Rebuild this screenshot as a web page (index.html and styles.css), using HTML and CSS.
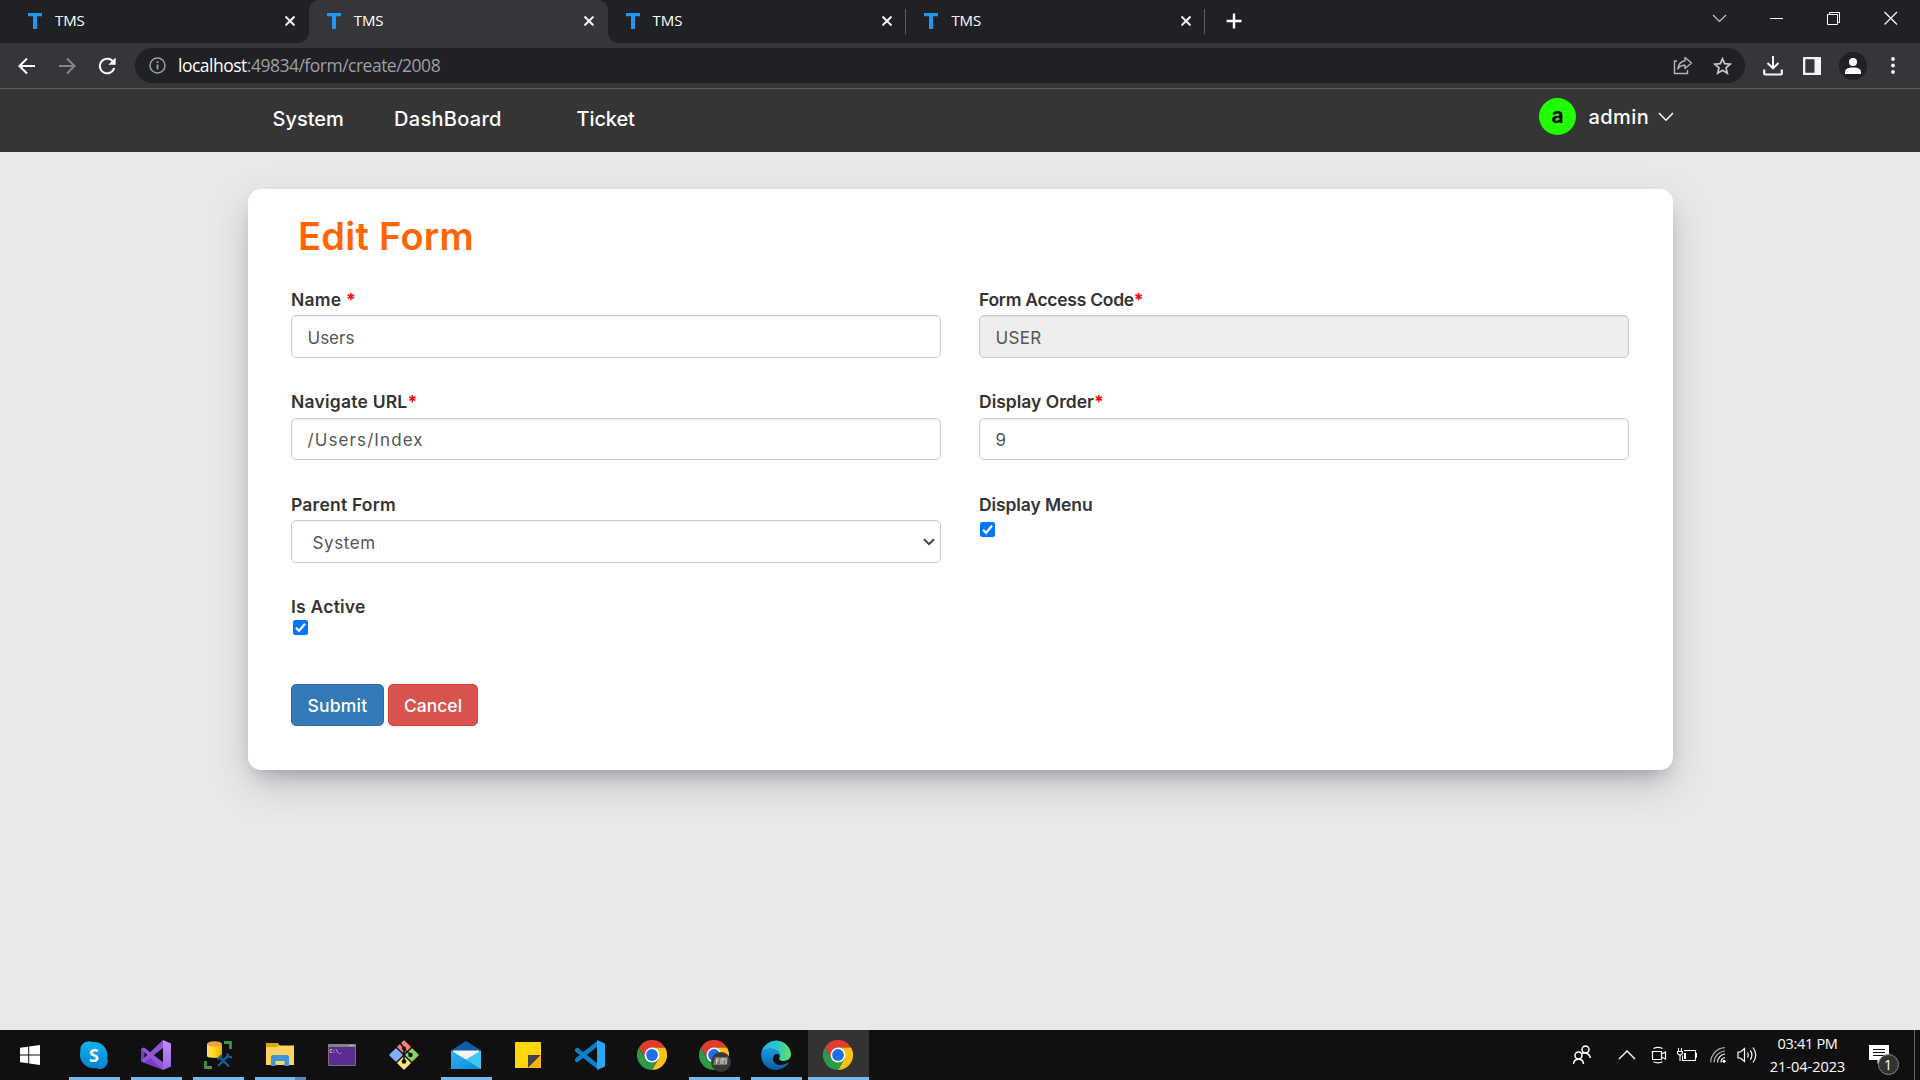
FILE: index.html
```html
<!DOCTYPE html>
<html lang="en">
<head>
<meta charset="utf-8">
<title>TMS</title>
<link rel="stylesheet" href="styles.css">
</head>
<body>
<svg class="defs" width="0" height="0">
  <defs>
    <linearGradient id="g-skype" x1="0" y1="0" x2="0" y2="1"><stop offset="0" stop-color="#0cb4ee"/><stop offset="1" stop-color="#0781cf"/></linearGradient>
    <linearGradient id="g-edge" x1="0" y1="0" x2="1" y2="0"><stop offset="0" stop-color="#2bb2ee"/><stop offset=".55" stop-color="#2cc6c8"/><stop offset="1" stop-color="#6ce05c"/></linearGradient>
    <linearGradient id="g-edge2" x1="0" y1="0" x2="0" y2="1"><stop offset="0" stop-color="#1a9be0"/><stop offset="1" stop-color="#0c5aa8"/></linearGradient>
    <linearGradient id="g-mail" x1="0" y1="0" x2="1" y2="1"><stop offset="0" stop-color="#2fb3ee"/><stop offset="1" stop-color="#0f86dc"/></linearGradient>
    <linearGradient id="g-vs" x1="0" y1="0" x2="0" y2="1"><stop offset="0" stop-color="#c08cf4"/><stop offset="1" stop-color="#9b63e6"/></linearGradient>
    <linearGradient id="g-db" x1="0" y1="0" x2="1" y2="0"><stop offset="0" stop-color="#ffe26b"/><stop offset=".6" stop-color="#ffd500"/><stop offset="1" stop-color="#e6ae00"/></linearGradient>
    <symbol id="chrome" viewBox="0 0 30 30">
      <path fill="#e33b2e" d="M2 7.5A15 15 0 0 1 28 7.5H15L8.5 18.8Z"/>
      <path fill="#fbc116" d="M28 7.5A15 15 0 0 1 15 30L21.5 18.7 15 7.5Z"/>
      <path fill="#2c9a47" d="M2 7.5A15 15 0 0 0 15 30L21.5 18.7H8.5Z"/>
      <circle cx="15" cy="15" r="7.5" fill="#fff"/><circle cx="15" cy="15" r="5.9" fill="#1f6fea"/>
    </symbol>
    <symbol id="tee" viewBox="0 0 14 16"><path fill="#2196f3" d="M0 0H14V3.2H9V16H5V3.2H0Z"/></symbol>
    <symbol id="ex" viewBox="0 0 10 10"><path d="M.5 .5 9.5 9.5M9.5 .5.5 9.5" stroke="#f1f3f4" stroke-width="2" fill="none"/></symbol>
  </defs>
</svg>

<header class="tabstrip">
  <div class="tab"><svg class="favicon"><use href="#tee"/></svg><span class="tab-title">TMS</span><svg class="tab-close"><use href="#ex"/></svg></div>
  <div class="tab active"><svg class="favicon"><use href="#tee"/></svg><span class="tab-title">TMS</span><svg class="tab-close"><use href="#ex"/></svg></div>
  <div class="tab ruled"><svg class="favicon"><use href="#tee"/></svg><span class="tab-title">TMS</span><svg class="tab-close"><use href="#ex"/></svg></div>
  <div class="tab ruled"><svg class="favicon"><use href="#tee"/></svg><span class="tab-title">TMS</span><svg class="tab-close"><use href="#ex"/></svg></div>
  <svg class="new-tab" width="16" height="16" viewBox="0 0 16 16"><path d="M8 .5V15.5M.5 8H15.5" stroke="#fff" stroke-width="2.4"/></svg>
  <div class="window-controls">
    <svg width="57" height="37" viewBox="0 0 57 37"><path d="M22 15 28.5 21.5 35 15" fill="none" stroke="#c6c7c9" stroke-width="1.2"/></svg>
    <svg width="57" height="37" viewBox="0 0 57 37"><path d="M22 18.5H35" stroke="#fff"/></svg>
    <svg width="57" height="37" viewBox="0 0 57 37"><path d="M22.5 14.500H32.500V24.500H22.500ZM24.500 14.500V12.500H34.500V22.500H32.500" fill="none" stroke="#fff"/></svg>
    <svg width="57" height="37" viewBox="0 0 57 37"><path d="M22.500 12 35 24.500M35 12 22.500 24.500" stroke="#fff" stroke-width="1.2"/></svg>
  </div>
</header>

<div class="toolbar">
  <svg class="tool" width="18" height="18" viewBox="0 0 18 18"><path d="M17 9H2.500M9 1.500 1.500 9 9 16.500" fill="none" stroke="#fff" stroke-width="2"/></svg>
  <svg class="tool" width="18" height="18" viewBox="0 0 18 18"><path d="M1 9H15.500M9 1.500 16.500 9 9 16.500" fill="none" stroke="#84868a" stroke-width="2"/></svg>
  <svg class="tool" width="18" height="18" viewBox="0 0 18 18"><path d="M15.300 5A7.300 7.300 0 1 0 16.200 11" fill="none" stroke="#fff" stroke-width="2"/><path d="M17.600 .500V7.800H10.300Z" fill="#fff"/></svg>
  <div class="omnibox">
    <svg width="17" height="17" viewBox="0 0 17 17"><circle cx="8.500" cy="8.500" r="7.500" fill="none" stroke="#9aa0a6" stroke-width="1.500"/><path d="M8.500 7.500V12.500M8.500 4.300V6" stroke="#9aa0a6" stroke-width="1.800"/></svg>
    <span class="url"><b class="host">localhost</b>:49834/form/create/2008</span>
    <svg class="share" width="20" height="19" viewBox="0 0 20 19"><path d="M4 5H1.500V17.500H14.500V14" fill="none" stroke="#b4b5b7" stroke-width="1.400"/><path d="M12 1.500 18.500 7 12 12.500V9.300C8.500 9.300 6.300 10.500 4.800 13 5.200 8.500 7.800 5.500 12 4.800Z" fill="none" stroke="#b4b5b7" stroke-width="1.400" stroke-linejoin="round"/></svg>
    <svg width="19" height="18" viewBox="0 0 19 18"><path d="M9.500 1.800 11.700 6.700 17.200 7.200 13 10.800 14.300 16.200 9.500 13.300 4.700 16.200 6 10.800 1.800 7.200 7.300 6.700Z" fill="none" stroke="#c6c7c8" stroke-width="1.700"/></svg>
  </div>
  <div class="actions">
    <svg width="20" height="20" viewBox="0 0 20 20"><path d="M10 0V11M4.500 7 10 12.300 15.500 7" fill="none" stroke="#f1f3f4" stroke-width="2"/><path d="M1.200 13.500V17.500Q1.200 18.500 2.200 18.500H17.800Q18.800 18.500 18.800 17.500V13.500" fill="none" stroke="#f1f3f4" stroke-width="2.200"/></svg>
    <svg width="18" height="18" viewBox="0 0 18 18"><path d="M0 0H18V18H0ZM2.300 2.300V15.700H11.500V2.300Z" fill="#f1f3f4" fill-rule="evenodd"/></svg>
    <svg width="28" height="28" viewBox="0 0 28 28"><circle cx="14" cy="14" r="14" fill="#202124"/><circle cx="14" cy="10" r="4" fill="#fff"/><path d="M6 22V20C6 17 9.500 15.600 14 15.600S22 17 22 20V22Z" fill="#fff"/></svg>
    <svg width="4" height="17" viewBox="0 0 4 17"><circle cx="2" cy="2" r="1.900" fill="#f1f3f4"/><circle cx="2" cy="8.500" r="1.900" fill="#f1f3f4"/><circle cx="2" cy="15" r="1.900" fill="#f1f3f4"/></svg>
  </div>
</div>

<nav class="site-nav">
  <a class="link system">System</a>
  <a class="link dashboard">DashBoard</a>
  <a class="link ticket">Ticket</a>
  <div class="account"><span class="avatar">a</span><span class="user">admin</span><svg width="16" height="10" viewBox="0 0 16 10"><path d="M1 1 8 8.300 15 1" fill="none" stroke="#fff" stroke-width="1.400"/></svg></div>
</nav>

<main class="page">
  <section class="card">
    <h1 class="title">Edit Form</h1>
    <form class="fields">
      <div class="field"><label class="label loose">Name <i class="req">*</i></label><div class="control">Users</div></div>
      <div class="field"><label class="label tight">Form Access Code<i class="req">*</i></label><div class="control disabled">USER</div></div>
      <div class="field"><label class="label loose">Navigate URL<i class="req">*</i></label><div class="control short path">/Users/Index</div></div>
      <div class="field"><label class="label">Display Order<i class="req">*</i></label><div class="control short">9</div></div>
      <div class="field"><label class="label loose">Parent Form</label><div class="control select">System<svg width="12" height="8" viewBox="0 0 12 8"><path d="M1 1.200 6 6.200 11 1.200" fill="none" stroke="#444" stroke-width="2"/></svg></div></div>
      <div class="field"><label class="label snug">Display Menu</label><svg class="check spaced" width="15" height="15" viewBox="0 0 15 15"><rect width="15" height="15" rx="2.200" fill="#0075ff"/><path d="M3 7.800 6 10.900 12 3.700" fill="none" stroke="#fff" stroke-width="2.200"/></svg></div>
      <div class="field"><label class="label loose">Is Active</label><svg class="check" width="15" height="15" viewBox="0 0 15 15"><rect width="15" height="15" rx="2.200" fill="#0075ff"/><path d="M3 7.800 6 10.900 12 3.700" fill="none" stroke="#fff" stroke-width="2.200"/></svg></div>
    </form>
    <div class="buttons"><button class="btn submit">Submit</button><button class="btn cancel">Cancel</button></div>
  </section>
</main>

<footer class="taskbar">
  <div class="slot start"><svg width="20" height="20" viewBox="0 0 20 20"><path fill="#fff" d="M0 2.800 8.200 1.700V9.500H0ZM9.200 1.500 20 0V9.500H9.200ZM0 10.500H8.200V18.300L0 17.200ZM9.200 10.500H20V20L9.200 18.500Z"/></svg></div>
  <div class="slot open"><svg width="30" height="30" viewBox="0 0 30 30"><path d="M9 1.500A8 8 0 0 0 1.500 11 13.500 13.500 0 0 0 17 28 8 8 0 0 0 28.200 18 13.500 13.500 0 0 0 13.500 2 8 8 0 0 0 9 1.500Z" fill="url(#g-skype)"/><text class="skype-s" x="15" y="21.500" text-anchor="middle">S</text></svg></div>
  <div class="slot open"><svg width="30" height="30" viewBox="0 0 30 30"><path fill="#7a3cc0" d="M0 9 3 7.500 22 22.500V30L3 22.700 0 21Z"/><path fill="#111" d="M3.500 11.500V18.500L7 15Z"/><path fill="#8f55d6" d="M0 21 22 0V8L3 22.700Z"/><path fill="#9355d8" d="M3 7.500 22 22.500V30L0 9Z"/><path fill="#111" d="M22 9.500V20.500L15 15Z"/><path fill="url(#g-vs)" d="M22 0 30 3.500V26.500L22 30Z"/></svg></div>
  <div class="slot open"><svg width="30" height="30" viewBox="0 0 30 30"><path d="M4 4V16C4 18.500 19 18.500 19 16V4Z" fill="url(#g-db)"/><ellipse cx="11.500" cy="4" rx="7.500" ry="2.800" fill="#eba34e"/><path d="M21 2.500H27.500V9M2.500 21V27.500H9" fill="none" stroke="#3f9446" stroke-width="2.800"/><path d="M15 26 25.500 15.500M17 17.500 26 26.500M14.500 19.500 19 15M24 13.500 25.500 16.500 29 17.500" fill="none" stroke="#10609f" stroke-width="2.300"/></svg></div>
  <div class="slot open stacked"><svg width="30" height="30" viewBox="0 0 30 30"><path fill="#e0a010" d="M1 3H13L15 6H28V12H1Z"/><path fill="#ffd35d" d="M1 7H11L14 5.500H29V25H1Z"/><path fill="#3e94dc" d="M6 26V17Q6 15 8 15H22Q24 15 24 17V26H19.500V21H10.500V26Z"/></svg></div>
  <div class="slot"><svg width="30" height="30" viewBox="0 0 30 30"><path fill="#5b2d90" stroke="#77717c" d="M1.500 4.500H28.500V25.500H1.500Z"/><path fill="#85818a" d="M1 4H29V7H1Z"/><path d="M22 5.500H28" stroke="#ddd" stroke-dasharray="1 1"/><text class="prompt" x="2.500" y="12.500">C:\_</text></svg></div>
  <div class="slot"><svg width="30" height="30" viewBox="0 0 30 30"><rect x="10" y="2" width="10" height="10" rx="1" transform="rotate(45 15 7)" fill="#f6807d"/><rect x="2" y="10" width="10" height="10" rx="1" transform="rotate(45 7 15)" fill="#82aef9"/><rect x="18" y="10" width="10" height="10" rx="1" transform="rotate(45 23 15)" fill="#8ccf60"/><rect x="10" y="18" width="10" height="10" rx="1" transform="rotate(45 15 23)" fill="#fbe27b"/><path d="M11 3 15 8V22M15 9 22 15" fill="none" stroke="#111" stroke-width="1.600"/><circle cx="15" cy="8.500" r="2" fill="#111"/><circle cx="21.500" cy="15" r="2.200" fill="#111"/><circle cx="15" cy="21.500" r="2.300" fill="#111"/></svg></div>
  <div class="slot open"><svg width="30" height="30" viewBox="0 0 30 30"><path fill="#0d5fae" d="M0 10.500 15 1 30 10.500V20H0Z"/><path fill="#f4f4f4" d="M2 10.500H28V20H2Z"/><path fill="#40c8f4" d="M30 10.500V29H8L15 19.500Z"/><path fill="url(#g-mail)" d="M0 10.500 30 29H0Z"/></svg></div>
  <div class="slot"><svg width="30" height="30" viewBox="0 0 30 30"><path fill="#ffd60a" d="M2 3Q2 2 3 2H27Q28 2 28 3V28H2Z"/><path fill="#444" d="M15 15H28L15 28Z"/><path fill="#f5b50e" d="M28 15V28H15Z"/></svg></div>
  <div class="slot"><svg width="30" height="30" viewBox="0 0 30 30"><path d="M2.200 10.200 22 26M2.200 19.800 22 4" stroke="#0b7fcd" stroke-width="4.500" stroke-linecap="round"/><path fill="#27a7f3" d="M22 0 30 3.500V26.500L22 30Z"/></svg></div>
  <div class="slot"><svg width="30" height="30"><use href="#chrome"/></svg></div>
  <div class="slot open"><svg class="profiled" width="30" height="30"><use href="#chrome"/><circle cx="22" cy="22" r="10" fill="#393939"/><path d="M16 17H29L28 25H14Z" fill="#77776c"/><path d="M17.500 19V24M17.500 19H20M17.500 21H19.500M22 24V19H24M24 24V19H27V24" stroke="#d8d8cf" fill="none"/></svg></div>
  <div class="slot open"><svg width="30" height="30" viewBox="0 0 30 30"><path fill="url(#g-edge)" d="M.500 12A15 15 0 0 1 30 14C30 19 26 21 22 21 18 21 17.500 19 18.500 17.500 20 14 17 10 12 9 7 8 2 10 .500 12Z"/><path fill="url(#g-edge2)" d="M.200 13C2 9 7 7.500 12 9 17 10 19 13 18.500 16 17 12.500 12 14 12 19 12 24 19 28 28 22 24 29 17 31 11 29.500 4 27.500-.500 21 .200 13Z"/></svg></div>
  <div class="slot open current"><svg width="30" height="30"><use href="#chrome"/></svg></div>
  <div class="tray">
    <svg width="20" height="20" viewBox="0 0 20 20"><g fill="none" stroke="#fff" stroke-width="1.500"><circle cx="13.500" cy="4.500" r="3.500"/><circle cx="6.500" cy="10.500" r="3.500"/><path d="M1.500 19C2 12.800 11 12.800 11.500 19M9.500 8.500C14 6.500 17.500 9 18.500 13"/></g></svg>
    <svg width="18" height="10" viewBox="0 0 18 10"><path d="M1 9 9 1 17 9" fill="none" stroke="#fff" stroke-width="1.400"/></svg>
    <svg width="16" height="18" viewBox="0 0 16 18"><path d="M1.500 5.500H10.500V13.500H1.500ZM10.500 8 14.500 6V13L10.500 11M2.500 2.500Q7 .300 11.500 2.500M2.500 15.800Q7 18 11.500 15.800" fill="none" stroke="#fff" stroke-width="1.200"/></svg>
    <svg width="20" height="14" viewBox="0 0 20 14"><path d="M7 2.500H18.500V12.500H5.500V7.500M18.500 5.500H19.500V9.500M1.500 0V3M4.500 0V3M.500 3.500H5.500V5.500L3 7.500.500 5.500ZM3 7V13" fill="none" stroke="#fff" stroke-width="1.100"/><path d="M7 5H9V11H7Z" fill="#fff"/></svg>
    <svg width="16" height="16" viewBox="0 0 16 16"><g fill="none" stroke="#fff" stroke-width="1.200"><path d="M11 15.500A5 5 0 0 1 15 10.500M7.500 15.500A8.500 8.500 0 0 1 15 7"/><path d="M4 15.500A12 12 0 0 1 15 4M.700 15.500A15 15 0 0 1 15 .700" stroke="#aaa"/></g><circle cx="14" cy="14.300" r="1.500" fill="#fff"/></svg>
    <svg width="21" height="18" viewBox="0 0 21 18"><path d="M1 6V12H3.500L7.500 15.500V2.500L3.500 6ZM10.500 6.500Q12 9 10.500 11.500M13.300 4.300Q16.500 9 13.300 13.700M16 1.500Q21.500 9 16 16.500" fill="none" stroke="#fff" stroke-width="1.200"/></svg>
    <div class="clock"><span class="time">03:41 PM</span><span class="date">21-04-2023</span></div>
    <div class="notice"><svg width="20" height="20" viewBox="0 0 20 20"><path fill="#fff" d="M0 0H20V15H13L8.500 19V15H0Z"/><path d="M4 4.500H16M4 7.500H16M4 10.500H16" stroke="#111" stroke-width="1.200"/></svg><span class="count">1</span></div>
    <i class="peek"></i>
  </div>
</footer>
</body>
</html>
```

FILE: styles.css
```css
* { box-sizing: border-box; }
body { margin: 0; width: 1920px; height: 1080px; overflow: hidden; display: flex; flex-direction: column; font-family: "Open Sans", "Noto Sans", sans-serif; background: #e9e9e9; }
svg { display: block; flex: none; }
.defs { position: absolute; }

.tabstrip { height: 43px; background: #202124; display: flex; align-items: flex-start; flex: none; padding-left: 10px; }
.tab { width: 298.800px; height: 43px; display: flex; align-items: center; padding: 0 14px 1px 18px; position: relative; flex: none; }
.tab.active { background: #35363a; border-radius: 10px 10px 0 0; z-index: 1; }
.tab.active::before, .tab.active::after { content: ""; position: absolute; bottom: 0; width: 10px; height: 10px; }
.tab.active::before { left: -10px; background: radial-gradient(circle at 0 0, transparent 9.5px, #35363a 10px); }
.tab.active::after { right: -10px; background: radial-gradient(circle at 100% 0, transparent 9.5px, #35363a 10px); }
.tab.ruled::after { content: ""; position: absolute; right: 0; top: 9px; width: 1px; height: 25px; background: #5b5d61; }
.favicon { width: 14px; height: 16px; }
.tab-title { color: #fff; font-size: 15px; line-height: 20px; margin-left: 13px; padding-bottom: 2px; letter-spacing: -.1px; flex: 1; }
.tab-close { width: 10px; height: 10px; }
.new-tab { margin: 13px 0 0 20.500px; }
.window-controls { display: flex; margin: 0 1px 0 auto; }

.toolbar { height: 46px; background: #35363a; border-bottom: 1px solid #5b5c5f; display: flex; align-items: center; flex: none; padding-left: 18px; }
.tool { margin-right: 22px; }
.omnibox { width: 1610px; height: 35px; border-radius: 18px; background: #202124; display: flex; align-items: center; padding: 0 13px 0 14px; margin-left: -3px; }
.url { color: #9aa0a6; font-size: 17.500px; line-height: 24px; letter-spacing: -.5px; margin-left: 12px; padding-bottom: 1px; }
.host { color: #fff; font-weight: 400; }
.share { margin-left: auto; margin-right: 20px; }
.actions { display: flex; align-items: center; padding-left: 18px; }
.actions svg:nth-child(2) { margin-left: 20px; }
.actions svg:nth-child(3) { margin-left: 18px; }
.actions svg:nth-child(4) { margin-left: 24px; }

.site-nav { height: 63px; background: #353535; color: #fff; display: flex; align-items: center; flex: none; padding: 0 246px 6px 272.500px; font: 500 20px/28px Inter, sans-serif; }
.link { padding-top: 3px; white-space: nowrap; }
.system { width: 121.500px; }
.dashboard { width: 182.500px; letter-spacing: .3px; }
.ticket { letter-spacing: -.1px; }
.account { display: flex; align-items: center; margin-left: auto; padding-bottom: 2px; }
.avatar { width: 37px; height: 37px; border-radius: 50%; background: #2f0; color: #000; font: 700 21px/36px Inter, sans-serif; text-align: center; margin-top: -1px; }
.user { width: 69.500px; margin: 0 0 0 12.500px; letter-spacing: .45px; }

.page { flex: 1; min-height: 0; padding: 37px 247px 0 248px; }
.card { height: 581px; background: #fff; border-radius: 13px; padding: 27px 44px 0 43px; box-shadow: rgba(50, 50, 93, .25) 0 15px 38px -3px, rgba(0, 0, 0, .3) 0 10px 20px -10px; font-family: Inter, sans-serif; }
.title { margin: 0 0 0 7px; color: #ff6600; font-size: 38px; line-height: 40px; font-weight: 600; letter-spacing: .27px; }
.fields { display: grid; grid-template-columns: 650px 650px; column-gap: 38px; grid-template-rows: 103px 102px 102px 91px; padding-top: 31px; }
.label { display: block; font-size: 17.500px; line-height: 25px; font-weight: 600; color: #333; height: 28px; white-space: pre; }
.field:nth-child(3) .label, .field:nth-child(4) .label { line-height: 23px; }
.loose { letter-spacing: .22px; }
.tight { letter-spacing: -.28px; }
.snug { letter-spacing: -.1px; }
.req { color: #f00; font-style: normal; font-weight: 700; }
.control { height: 43px; border: 1px solid #ccc; border-radius: 5px; box-shadow: inset 0 1px 1px rgba(0, 0, 0, .075); padding: 3px 15.500px 0; font-size: 17px; line-height: 38px; color: #555; display: flex; align-items: center; }
.short { height: 42px; padding-top: 2px; }
.disabled { background: #eee; letter-spacing: .3px; }
.path { letter-spacing: 1.100px; }
.select { padding: 3px 5px 0 20.500px; justify-content: space-between; letter-spacing: .6px; }
.select svg { margin-top: -3px; }
.check { margin: -2px 0 0 2px; }
.check.spaced { margin: 2px 0 0 1px; }
.buttons { display: flex; gap: 4px; margin-top: -1px; }
.btn { height: 42px; border: 1px solid #2e6da4; border-radius: 5px; background: #337ab7; color: #fff; font: 500 17.500px/40px Inter, sans-serif; padding: 1px 0 0; width: 93px; letter-spacing: .2px; }
.cancel { width: 90px; background: #d9534f; border-color: #d43f3a; letter-spacing: 0; }

.taskbar { height: 50px; background: #101010; display: flex; flex: none; color: #fff; padding-left: 1px; }
.slot { width: 62px; display: flex; align-items: center; justify-content: center; position: relative; flex: none; }
.start { padding-right: 4px; }
.open::after { content: ""; position: absolute; bottom: 0; left: 6px; width: 51px; height: 3px; background: #76b9ed; }
.stacked::after { background: linear-gradient(90deg, #76b9ed 40px, #5389b4 40px); }
.current { background: #333; width: 61px; margin-left: 1px; padding-right: 1px; }
.current::after { left: 0; width: 61px; }
.profiled { overflow: visible; }
.skype-s { font: 700 18px "Open Sans", sans-serif; fill: #fff; }
.prompt { font: 5px "Liberation Mono", monospace; fill: #fff; }
.tray { display: flex; align-items: center; margin-left: auto; }
.tray > svg:nth-child(2) { margin-left: 26px; }
.tray > svg:nth-child(3) { margin-left: 15px; }
.tray > svg:nth-child(4) { margin-left: 10px; }
.tray > svg:nth-child(5) { margin-left: 13px; }
.tray > svg:nth-child(6) { margin-left: 11px; }
.clock { width: 76px; margin-left: 12px; display: flex; flex-direction: column; align-items: center; font-size: 14.500px; line-height: 23px; white-space: nowrap; }
.time { letter-spacing: -.3px; }
.notice { position: relative; margin-left: 23px; width: 30px; }
.count { position: absolute; left: 9px; top: 9px; width: 21px; height: 21px; border: 1px solid #888; border-radius: 50%; background: #333; font-size: 14px; line-height: 19px; text-align: center; }
.peek { width: 1px; height: 50px; background: #666; margin: 0 5px 0 15.500px; }
```
